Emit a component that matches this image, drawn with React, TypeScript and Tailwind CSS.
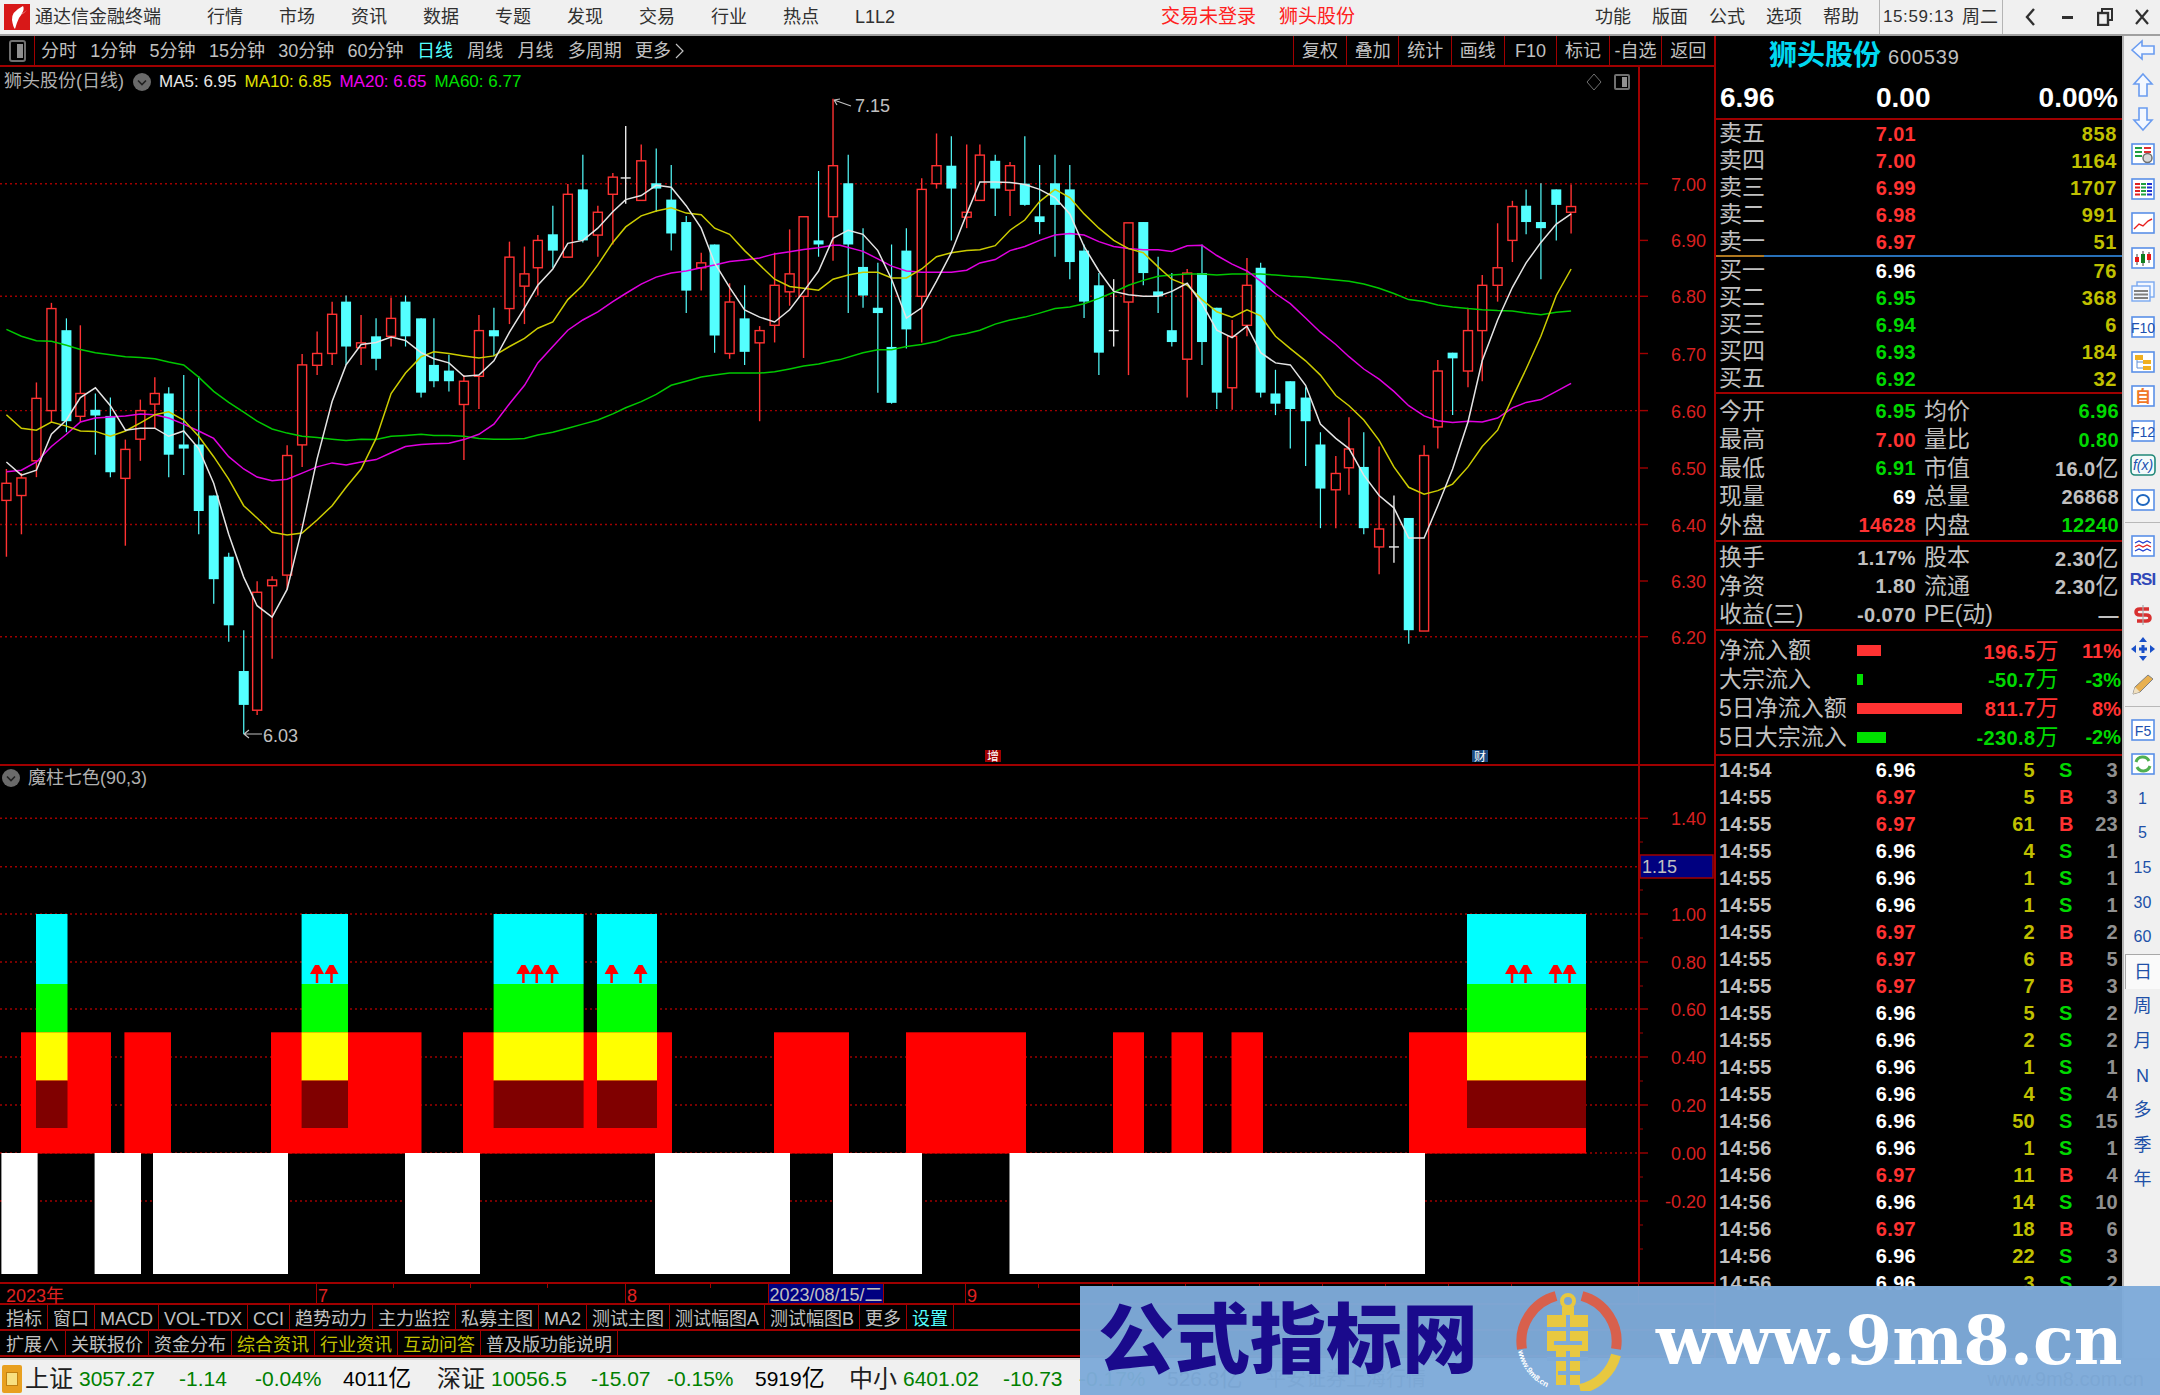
import React from "react";

// colours used by the quote board
const RED = "text-[#ff3232]";
const GREEN = "text-[#00d800]";
const YEL = "text-[#c0c000]";
const GRAY = "text-[#c0c0c0]";
const WHITE = "text-white";

// the chart numbers were read from zoomed crops, so they keep crop units
const xa = (z: number) => z / 1.8667;
const xb = (z: number) => 840 + z / 1.8233;
const yc = (z: number) => 120 + z / 2.45;

type Candle = [string, number, number, number, number, number];

const leftCandles: Candle[] = [
  ["r", 12, 855, 890, 932, 1070], ["r", 40, 865, 877, 920, 1015], ["r", 68, 643, 682, 835, 875], ["r", 96, 448, 462, 712, 740],
  ["c", 124, 486, 515, 738, 765], ["r", 150, 503, 670, 726, 740], ["c", 178, 670, 710, 724, 820], ["c", 206, 680, 725, 863, 875],
  ["r", 234, 783, 807, 878, 1043], ["r", 262, 685, 712, 782, 835], ["r", 289, 630, 670, 696, 755], ["c", 315, 655, 670, 820, 875],
  ["c", 343, 625, 795, 805, 870], ["c", 371, 628, 795, 958, 1015], ["c", 399, 920, 920, 1125, 1185], ["c", 427, 1060, 1070, 1238, 1278],
  ["c", 455, 1250, 1350, 1433, 1505], ["r", 480, 1130, 1157, 1446, 1458], ["r", 508, 1118, 1127, 1141, 1320], ["r", 536, 797, 822, 1115, 1150],
  ["r", 564, 573, 600, 796, 850], ["r", 592, 518, 572, 601, 625], ["r", 620, 445, 476, 572, 600], ["c", 646, 430, 445, 555, 600],
  ["r", 674, 478, 546, 558, 600], ["c", 702, 486, 530, 585, 613], ["r", 730, 435, 486, 530, 555], ["c", 757, 430, 445, 530, 555],
  ["c", 786, 486, 486, 668, 680], ["c", 810, 486, 600, 640, 655], ["c", 838, 575, 614, 640, 665], ["r", 866, 625, 640, 697, 833],
  ["r", 894, 478, 516, 628, 708], ["c", 922, 460, 515, 530, 578], ["r", 951, 298, 336, 462, 500], ["r", 979, 310, 377, 407, 500],
  ["r", 1004, 282, 295, 362, 430], ["c", 1032, 210, 280, 320, 362], ["r", 1060, 157, 182, 336, 337], ["c", 1088, 85, 170, 295, 300],
  ["r", 1116, 210, 226, 282, 335], ["r", 1144, 130, 140, 182, 305], ["w", 1168, 15, 142, 142, 205], ["r", 1197, 60, 100, 197, 197],
  ["c", 1225, 70, 155, 168, 225], ["c", 1253, 110, 195, 278, 320], ["c", 1281, 235, 250, 418, 473], ["r", 1309, 325, 350, 362, 418],
  ["c", 1334, 305, 305, 528, 570], ["r", 1362, 400, 446, 572, 585], ["c", 1390, 405, 486, 568, 600], ["r", 1418, 505, 516, 546, 738],
  ["r", 1446, 325, 405, 503, 545], ["r", 1474, 268, 377, 421, 455], ["r", 1500, 237, 237, 432, 583], ["c", 1528, 125, 295, 305, 335],
  ["r", 1555, -52, 112, 237, 345],
];

const rightCandles: Candle[] = [
  ["c", 15, 85, 155, 305, 473], ["c", 42, 265, 360, 430, 460], ["c", 69, 350, 460, 473, 668], ["c", 94, 305, 556, 693, 695],
  ["c", 121, 265, 320, 513, 560], ["r", 149, 143, 170, 432, 545], ["r", 176, 33, 112, 156, 168], ["c", 203, 40, 112, 168, 295],
  ["r", 231, 60, 226, 238, 265], ["r", 255, 60, 86, 197, 197], ["c", 283, 85, 100, 168, 235], ["r", 310, 103, 112, 172, 235],
  ["c", 337, 40, 156, 208, 210], ["c", 364, 110, 236, 250, 280], ["c", 392, 85, 155, 208, 335], ["c", 419, 110, 170, 348, 390],
  ["c", 445, 305, 320, 445, 485], ["c", 472, 375, 405, 570, 625], ["w", 499, 390, 516, 516, 555], ["r", 526, 252, 252, 446, 625],
  ["c", 553, 250, 250, 375, 405], ["c", 580, 335, 420, 432, 473], ["c", 605, 375, 515, 544, 555], ["r", 633, 365, 375, 586, 680],
  ["c", 660, 305, 375, 544, 600], ["c", 687, 460, 460, 668, 708], ["r", 715, 490, 530, 656, 710], ["r", 742, 338, 405, 503, 530],
  ["c", 767, 350, 362, 668, 680], ["c", 794, 612, 670, 695, 723], ["c", 821, 640, 640, 708, 805], ["c", 849, 655, 680, 738, 848],
  ["c", 876, 765, 795, 903, 1000], ["r", 904, 823, 866, 906, 1000], ["r", 928, 728, 806, 852, 918], ["c", 955, 765, 850, 1000, 1015],
  ["r", 983, 800, 1002, 1046, 1113], ["w", 1010, 920, 1046, 1046, 1085], ["c", 1037, 975, 975, 1250, 1283], ["r", 1065, 797, 822, 1252, 1252],
  ["r", 1090, 588, 615, 752, 805], ["c", 1117, 570, 570, 584, 723], ["r", 1145, 460, 516, 615, 655], ["r", 1171, 380, 405, 516, 640],
  ["r", 1199, 253, 362, 405, 445], ["r", 1226, 198, 212, 295, 348], ["c", 1251, 170, 210, 250, 280], ["c", 1278, 155, 250, 265, 390],
  ["c", 1306, 170, 170, 208, 295], ["r", 1333, 158, 212, 226, 278],
];

const maLines = [
  {
    color: "#00c800",
    a: "12,513 40,530 68,541 96,542 124,552 150,562 178,570 206,575 234,580 262,582 289,585 315,593 343,600 371,630 399,665 427,692 455,716 480,738 508,757 536,767 564,775 592,778 620,782 646,785 674,782 702,783 730,775 757,773 786,770 810,773 838,773 866,775 894,780 922,782 951,782 979,780 1004,772 1032,765 1060,755 1088,745 1116,735 1144,720 1168,705 1197,690 1225,672 1253,650 1281,640 1309,630 1334,625 1362,620 1390,620 1418,620 1446,617 1474,610 1500,603 1528,598 1555,590",
    b: "0,587 42,570 69,563 94,563 121,555 149,550 176,543 203,530 231,523 255,515 283,500 310,490 337,483 364,473 392,462 419,458 445,450 472,437 499,422 526,405 553,393 580,383 605,380 633,377 660,377 687,380 715,377 742,377 767,377 794,380 821,383 849,385 876,388 904,392 928,395 955,402 983,412 1010,425 1037,440 1065,445 1090,453 1117,458 1145,462 1171,465 1199,467 1226,468 1251,473 1278,477 1306,471 1333,468",
  },
  {
    color: "#e000e0",
    a: "12,862 40,858 68,838 96,800 124,770 150,740 178,730 206,728 234,725 262,720 289,722 315,730 343,745 371,762 399,780 427,825 455,855 480,875 508,884 536,880 564,865 592,850 620,840 646,845 674,838 702,832 730,815 757,800 786,795 810,793 838,792 866,783 894,770 922,745 951,695 979,650 1004,595 1032,555 1060,515 1088,490 1116,470 1144,445 1168,425 1197,402 1225,385 1253,375 1281,370 1309,362 1334,355 1362,347 1390,343 1418,338 1446,328 1474,323 1500,317 1528,313 1555,307",
    b: "0,307 42,322 69,340 94,358 121,370 149,373 176,373 203,373 231,368 255,350 283,342 310,320 337,310 364,295 392,282 419,278 445,282 472,298 499,310 526,315 553,318 580,318 605,322 633,308 660,307 687,332 715,353 742,370 767,395 794,425 821,450 849,485 876,520 904,550 928,580 955,610 983,635 1010,665 1037,700 1065,725 1090,737 1117,741 1145,738 1171,740 1199,730 1226,705 1251,692 1278,685 1306,665 1333,645",
  },
  {
    color: "#cccc00",
    a: "12,722 40,755 68,760 96,740 124,750 150,762 178,763 206,775 234,762 262,742 289,722 315,715 343,735 371,775 399,825 427,880 455,945 480,975 508,1010 536,1017 564,1012 592,980 620,945 646,900 674,855 702,780 730,670 757,620 786,580 810,568 838,572 866,578 894,583 922,578 951,555 979,535 1004,510 1032,495 1060,440 1088,405 1116,355 1144,300 1168,262 1197,235 1225,223 1253,215 1281,228 1309,232 1334,265 1362,280 1390,320 1418,355 1446,390 1474,408 1500,412 1528,417 1555,390",
    b: "15,380 42,373 69,373 94,387 121,387 149,365 176,335 203,325 231,320 255,318 283,308 310,270 337,245 364,200 392,170 419,190 445,230 472,265 499,295 526,315 553,325 580,360 605,390 633,405 660,440 687,470 715,483 742,465 767,480 794,530 821,560 849,590 876,625 904,675 928,700 955,735 983,785 1010,850 1037,900 1065,917 1090,908 1117,892 1145,850 1171,800 1199,760 1226,680 1251,610 1278,530 1306,430 1333,365",
  },
  {
    color: "#e4e4e4",
    a: "12,838 40,870 68,858 96,770 124,735 150,680 178,656 206,700 234,760 262,755 289,755 315,775 343,762 371,805 399,890 427,1015 455,1120 480,1190 508,1218 536,1150 564,1000 592,830 620,690 646,600 674,550 702,545 730,532 757,540 786,570 810,585 838,595 866,628 894,625 922,590 951,520 979,460 1004,405 1032,365 1060,302 1088,295 1116,265 1144,225 1168,195 1197,185 1225,160 1253,165 1281,210 1309,265 1334,350 1362,410 1390,465 1418,483 1446,495 1474,465 1500,420 1528,370 1555,290",
    b: "15,270 42,280 69,320 94,390 121,485 149,460 176,395 203,325 231,230 255,152 283,152 310,153 337,158 364,170 392,190 419,230 445,310 472,370 499,420 526,428 553,432 580,432 605,420 633,400 660,450 687,515 715,533 742,505 767,570 794,595 821,600 849,650 876,745 904,780 928,805 955,870 983,920 1010,950 1037,1024 1065,1024 1090,945 1117,855 1145,740 1171,590 1199,490 1226,410 1251,350 1278,300 1306,255 1333,230",
  },
];

const toPoints = (s: string, fx: (z: number) => number) =>
  s
    .split(" ")
    .map((p) => {
      const [x, y] = p.split(",").map(Number);
      return `${fx(x).toFixed(1)},${yc(y).toFixed(1)}`;
    })
    .join(" ");

const CandleMark = ({ c, fx }: { c: Candle; fx: (z: number) => number }) => {
  const [kind, xz, wt, bt, bb, wb] = c;
  const x = fx(xz);
  if (kind === "w") {
    return (
      <g stroke="#e8e8e8" strokeWidth={1.4}>
        <line x1={x} x2={x} y1={yc(wt)} y2={yc(wb)} />
        <line x1={x - 5} x2={x + 5} y1={yc(bt)} y2={yc(bt)} />
      </g>
    );
  }
  if (kind === "c") {
    return (
      <g>
        <line x1={x} x2={x} y1={yc(wt)} y2={yc(wb)} stroke="#54ffff" strokeWidth={1.2} />
        <rect x={x - 5} y={yc(bt)} width={10} height={yc(bb) - yc(bt)} fill="#54ffff" />
      </g>
    );
  }
  return (
    <g stroke="#ff3232" strokeWidth={1.4} fill="none">
      <line x1={x} x2={x} y1={yc(wt)} y2={yc(bt)} />
      <line x1={x} x2={x} y1={yc(bb)} y2={yc(wb)} />
      <rect x={x - 4.5} y={yc(bt)} width={9} height={yc(bb) - yc(bt)} fill="#000" />
    </g>
  );
};

const MainChart = () => {
  const labels: [string, number, boolean][] = [
    ["7.00", 183.7, true], ["6.90", 240.4, false], ["6.80", 296.3, true], ["6.70", 353.5, false],
    ["6.60", 410.6, true], ["6.50", 468, false], ["6.40", 524.5, true], ["6.30", 581, false], ["6.20", 636.7, true],
  ];
  return (
    <svg viewBox="0 95 1714 669" width={1714} height={669} className="block">
      {labels.map(([t, y, dotted]) => (
        <g key={t}>
          {dotted && <line x1={0} x2={1639} y1={y} y2={y} stroke="#a00000" strokeWidth={1.4} strokeDasharray="2 3" />}
          <line x1={1639} x2={1648} y1={y} y2={y} stroke="#a00000" strokeWidth={1.4} />
          <text x={1706} y={y + 7} textAnchor="end" fontSize={18} fill="#d82020">{t}</text>
        </g>
      ))}
      <line x1={1639} x2={1639} y1={95} y2={764} stroke="#a00000" strokeWidth={2} />
      {leftCandles.map((c) => <CandleMark key={"a" + c[1]} c={c} fx={xa} />)}
      {rightCandles.map((c) => <CandleMark key={"b" + c[1]} c={c} fx={xb} />)}
      {maLines.map((m) => (
        <g key={m.color} fill="none" stroke={m.color} strokeWidth={1.5}>
          <polyline points={toPoints(m.a, xa) + " " + toPoints(m.b, xb)} />
        </g>
      ))}
      {/* high and low marks */}
      <g stroke="#c0c0c0" fill="none" strokeWidth={1.2}>
        <path d="M834 100 L851 106 M834 100 L840 99 M834 100 L837 105" />
        <path d="M244 734 L262 734 M244 734 L249 730 M244 734 L249 738" />
      </g>
      <text x={855} y={112} fontSize={18} fill="#c0c0c0">7.15</text>
      <text x={263} y={742} fontSize={18} fill="#c0c0c0">6.03</text>
      <rect x={985} y={750} width={16} height={12} fill="#a00000" />
      <text x={993} y={761} fontSize={12} fill="#fff" textAnchor="middle">增</text>
      <rect x={1472} y={750} width={16} height={12} fill="#1a4a80" />
      <text x={1480} y={761} fontSize={12} fill="#fff" textAnchor="middle">财</text>
    </svg>
  );
};

const redBlocks = [[21, 111], [124.4, 171], [271, 421.5], [463, 672], [774, 849], [906, 1026], [1113, 1144], [1171.5, 1203], [1231.5, 1263], [1409, 1586]];
const colorColumns = [[36, 67.5], [301.6, 348], [493.6, 583.6], [597, 657], [1467, 1586]];
const whiteBlocks = [[1.4, 37.6], [94.6, 141], [153, 288], [405, 480], [655, 790], [833, 922], [1009.5, 1425]];
const arrows = [317, 331.5, 523.4, 536.7, 552, 611.6, 640.5, 1512, 1525.5, 1555.5, 1569.5];
const lowerLabels: [string, number][] = [
  ["1.40", 818.3], ["1.00", 914], ["0.80", 962], ["0.60", 1009], ["0.40", 1057], ["0.20", 1105], ["0.00", 1153], ["-0.20", 1201],
];
const lowerMinorTicks = [842, 890, 938, 986, 1033, 1081, 1129, 1177, 1225, 1249];

const LowerChart = () => (
  <svg viewBox="0 790 1714 492" width={1714} height={492} className="block">
    {[818.3, 866.7, 914, 962, 1009, 1057, 1105, 1153, 1201].map((y) => (
      <g key={y}>
        <line x1={0} x2={1639} y1={y} y2={y} stroke="#a00000" strokeWidth={1.4} strokeDasharray="2 3" />
        <line x1={1639} x2={1648} y1={y} y2={y} stroke="#a00000" strokeWidth={1.4} />
      </g>
    ))}
    {lowerMinorTicks.map((y) => <line key={y} x1={1639} x2={1643} y1={y} y2={y} stroke="#a00000" strokeWidth={1} />)}
    {lowerLabels.map(([t, y]) => (
      <text key={t} x={1706} y={y + 7} textAnchor="end" fontSize={18} fill="#d82020">{t}</text>
    ))}
    <line x1={1639} x2={1639} y1={790} y2={1282} stroke="#a00000" strokeWidth={2} />
    <rect x={1640} y={855} width={73} height={23} fill="#000080" stroke="#a00000" strokeWidth={1.5} />
    <text x={1642} y={873} fontSize={18} fill="#c0c0c0">1.15</text>
    {redBlocks.map(([a, b]) => <rect key={a} x={a} y={1032.3} width={b - a} height={121.2} fill="#ff0000" />)}
    {colorColumns.map(([a, b]) => (
      <g key={a}>
        <rect x={a} y={914} width={b - a} height={70} fill="#00ffff" />
        <rect x={a} y={984} width={b - a} height={48.3} fill="#00ff00" />
        <rect x={a} y={1032.3} width={b - a} height={48.3} fill="#ffff00" />
        <rect x={a} y={1080.6} width={b - a} height={47.4} fill="#800000" />
      </g>
    ))}
    {whiteBlocks.map(([a, b]) => <rect key={a} x={a} y={1153} width={b - a} height={121} fill="#ffffff" />)}
    {arrows.map((x) => (
      <g key={x} fill="#ff0000">
        <rect x={x - 1.25} y={973} width={2.5} height={10} />
        <path d={`M${x - 2} 965 L${x + 2} 965 L${x + 7} 974 L${x - 7} 974 Z`} />
      </g>
    ))}
  </svg>
);

const ChevronCircle = () => (
  <svg width={18} height={18} viewBox="0 0 18 18" className="shrink-0">
    <circle cx={9} cy={9} r={9} fill="#6a6a6a" />
    <path d="M5 7.5 L9 11.5 L13 7.5" fill="none" stroke="#202020" strokeWidth={1.6} />
  </svg>
);

const Toolbar = () => (
  <div className="flex h-[31px] shrink-0 border-b-2 border-[#a00000] text-[18px] text-[#c0c0c0]">
    <div className="flex w-[35px] items-center justify-center border-r border-[#a00000]">
      <div className="flex h-[22px] w-[17px] items-center justify-end rounded-[3px] border-2 border-[#707070] pr-[1px]">
        <div className="h-[14px] w-[6px] bg-[#909090]" />
      </div>
    </div>
    <div className="ml-[6px] flex items-center gap-[13.3px] whitespace-nowrap pt-[1px]">
      {["分时", "1分钟", "5分钟", "15分钟", "30分钟", "60分钟"].map((t) => <span key={t}>{t}</span>)}
      <span className="text-[#54ffff]">日线</span>
      <span className="ml-[1px]">周线</span>
      <span className="ml-[1px]">月线</span>
      <span className="ml-[1px]">多周期</span>
      <span className="flex items-center gap-[4px]">
        更多
        <svg width={9} height={16} viewBox="0 0 9 16"><path d="M1 1 L8 8 L1 15" fill="none" stroke="#c0c0c0" strokeWidth={1.2} /></svg>
      </span>
    </div>
    <div className="ml-auto flex">
      {["复权", "叠加", "统计", "画线", "F10", "标记", "-自选", "返回"].map((t) => (
        <div key={t} className="flex w-[52.6px] items-center justify-center border-l border-[#a00000] pt-[1px] whitespace-nowrap">{t}</div>
      ))}
    </div>
  </div>
);

const InfoRow = () => (
  <div className="flex h-[28px] w-[1640px] shrink-0 items-center border-r-2 border-[#a00000] pl-[4px] pt-[1px] text-[17px] whitespace-nowrap">
    <span className="text-[18px] text-[#b0b0b0]">狮头股份(日线)</span>
    <span className="ml-[9px]"><ChevronCircle /></span>
    <span className="ml-[8px] text-[#e8e8e8]">MA5: 6.95</span>
    <span className="ml-[8px] text-[#e0e000]">MA10: 6.85</span>
    <span className="ml-[8px] text-[#f000f0]">MA20: 6.65</span>
    <span className="ml-[8px] text-[#00e000]">MA60: 6.77</span>
    <svg width={16} height={18} viewBox="0 0 16 18" className="ml-auto mr-[12px]"><path d="M8 1 L15 9 L8 17 L1 9 Z" fill="none" stroke="#707070" /></svg>
    <div className="mr-[8px] flex h-[16px] w-[16px] items-center justify-end rounded-[2px] border-2 border-[#707070] pr-[1px]">
      <div className="h-[10px] w-[5px] bg-[#909090]" />
    </div>
  </div>
);

const minorDateTicks = [393, 470, 547, 710, 1038, 1112, 1185, 1259, 1322, 1385, 1448, 1511];

const DateRow = () => (
  <div className="relative flex h-[23px] shrink-0 border-y-2 border-[#a00000] text-[18px] leading-[19px] whitespace-nowrap text-[#e02020]">
    <div className="w-[316px] pl-[6px] pt-[3px]">2023年</div>
    <div className="w-[309px] border-l border-[#a00000] pl-[1px] pt-[3px]">7</div>
    <div className="w-[143px] border-l border-[#a00000] pl-[1px] pt-[3px]">8</div>
    <div className="w-[116px] border-x border-[#a00000] bg-[#000080] pt-[2px] text-center text-[#c0c0c0]">2023/08/15/二</div>
    <div className="w-[81px]" />
    <div className="w-[674px] border-x border-[#a00000] pl-[1px] pt-[3px]">9</div>
    {minorDateTicks.map((x) => (
      <span key={x} className="absolute top-0 h-[4px] w-px bg-[#a00000]" style={{ left: x }} />
    ))}
  </div>
);

const TabRow = ({ items }: { items: { t: string; c?: string }[] }) => (
  <div className="flex h-[26px] shrink-0 items-stretch border-b-2 border-[#a00000] pl-[1px] text-[18px] whitespace-nowrap text-[#c0c0c0]">
    {items.map((i) => (
      <div key={i.t} className={`flex items-center border-r border-[#a00000] px-[5px] pt-[5px] ${i.c ?? ""}`}>{i.t}</div>
    ))}
  </div>
);

const Row5 = ({ label, price, pc, vol }: { label: string; price: string; pc: string; vol: string }) => (
  <div className="flex h-[27px] items-center justify-between">
    <div className="flex w-[197px] items-center justify-between">
      <span className="text-[23px] leading-none text-[#c0c0c0]">{label}</span>
      <span className={`text-[20px] font-bold tracking-[0.3px] ${pc}`}>{price}</span>
    </div>
    <span className={`pr-[1px] text-[20px] font-bold tracking-[0.6px] ${YEL}`}>{vol}</span>
  </div>
);

const Row2 = ({ a, av, ac, b, bv, bc }: { a: string; av: string; ac: string; b: string; bv: React.ReactNode; bc: string }) => (
  <div className="flex h-[28.5px] items-center">
    <div className="flex w-[197px] items-center justify-between">
      <span className="text-[23px] leading-none whitespace-nowrap text-[#c0c0c0]">{a}</span>
      <span className={`text-[20px] font-bold tracking-[0.4px] whitespace-nowrap ${ac}`}>{av}</span>
    </div>
    <div className="ml-[8px] flex flex-1 items-center justify-between">
      <span className="text-[23px] leading-none whitespace-nowrap text-[#c0c0c0]">{b}</span>
      <span className={`text-[20px] font-bold tracking-[0.4px] whitespace-nowrap ${bc}`}>{bv}</span>
    </div>
  </div>
);

const Yi = ({ v }: { v: string }) => <>{v}<span className="text-[23px] font-normal">亿</span></>;
const Wan = ({ v }: { v: string }) => <>{v}<span className="text-[23px] font-normal">万</span></>;

const flows = [
  { label: "净流入额", bar: "bg-[#ff3232]", w: 24, v: "196.5", p: "11%", c: RED },
  { label: "大宗流入", bar: "bg-[#00e000]", w: 6, v: "-50.7", p: "-3%", c: GREEN },
  { label: "5日净流入额", bar: "bg-[#ff3232]", w: 105, v: "811.7", p: "8%", c: RED },
  { label: "5日大宗流入", bar: "bg-[#00e000]", w: 29, v: "-230.8", p: "-2%", c: GREEN },
];

const ticks: [string, string, string, string, string][] = [
  ["14:54", "6.96", "5", "S", "3"], ["14:55", "6.97", "5", "B", "3"], ["14:55", "6.97", "61", "B", "23"], ["14:55", "6.96", "4", "S", "1"],
  ["14:55", "6.96", "1", "S", "1"], ["14:55", "6.96", "1", "S", "1"], ["14:55", "6.97", "2", "B", "2"], ["14:55", "6.97", "6", "B", "5"],
  ["14:55", "6.97", "7", "B", "3"], ["14:55", "6.96", "5", "S", "2"], ["14:55", "6.96", "2", "S", "2"], ["14:55", "6.96", "1", "S", "1"],
  ["14:55", "6.96", "4", "S", "4"], ["14:56", "6.96", "50", "S", "15"], ["14:56", "6.96", "1", "S", "1"], ["14:56", "6.97", "11", "B", "4"],
  ["14:56", "6.96", "14", "S", "10"], ["14:56", "6.97", "18", "B", "6"], ["14:56", "6.96", "22", "S", "3"], ["14:56", "6.96", "3", "S", "2"],
];

const QuotePanel = () => (
  <div className="flex h-full w-[408px] shrink-0 flex-col overflow-hidden border-l-2 border-[#a00000] bg-black">
    <div className="h-[84px] shrink-0 border-b-2 border-[#a00000]">
      <div className="flex h-[39px] items-center pl-[53px]">
        <span className="text-[28px] font-bold leading-none text-[#00d8f0]">狮头股份</span>
        <span className="ml-[7px] mt-[3px] text-[20px] tracking-[0.8px] text-[#c0c0c0]">600539</span>
      </div>
      <div className="flex h-[43px] items-center pl-[4px] pr-[4px] pt-[2px] text-[28px] font-bold leading-none text-white">
        <span className="w-[156px]">6.96</span>
        <span>0.00</span>
        <span className="ml-auto">0.00%</span>
      </div>
    </div>
    <div className="shrink-0 pl-[3px] pr-[4px]">
      <Row5 label="卖五" price="7.01" pc={RED} vol="858" />
      <Row5 label="卖四" price="7.00" pc={RED} vol="1164" />
      <Row5 label="卖三" price="6.99" pc={RED} vol="1707" />
      <Row5 label="卖二" price="6.98" pc={RED} vol="991" />
      <Row5 label="卖一" price="6.97" pc={RED} vol="51" />
    </div>
    <div className="flex h-[2px] shrink-0">
      <div className="w-[48px] bg-[#b07820]" />
      <div className="flex-1 bg-[#2870b8]" />
    </div>
    <div className="shrink-0 border-b-2 border-[#a00000] pl-[3px] pr-[4px]">
      <Row5 label="买一" price="6.96" pc={WHITE} vol="76" />
      <Row5 label="买二" price="6.95" pc={GREEN} vol="368" />
      <Row5 label="买三" price="6.94" pc={GREEN} vol="6" />
      <Row5 label="买四" price="6.93" pc={GREEN} vol="184" />
      <Row5 label="买五" price="6.92" pc={GREEN} vol="32" />
    </div>
    <div className="shrink-0 border-b-2 border-[#a00000] pl-[3px] pr-[3px] pt-[3px]">
      <Row2 a="今开" av="6.95" ac={GREEN} b="均价" bv="6.96" bc={GREEN} />
      <Row2 a="最高" av="7.00" ac={RED} b="量比" bv="0.80" bc={GREEN} />
      <Row2 a="最低" av="6.91" ac={GREEN} b="市值" bv={<Yi v="16.0" />} bc={GRAY} />
      <Row2 a="现量" av="69" ac={WHITE} b="总量" bv="26868" bc={GRAY} />
      <Row2 a="外盘" av="14628" ac={RED} b="内盘" bv="12240" bc={GREEN} />
    </div>
    <div className="shrink-0 border-b-2 border-[#a00000] pl-[3px] pr-[3px] pt-[2px]">
      <Row2 a="换手" av="1.17%" ac={GRAY} b="股本" bv={<Yi v="2.30" />} bc={GRAY} />
      <Row2 a="净资" av="1.80" ac={GRAY} b="流通" bv={<Yi v="2.30" />} bc={GRAY} />
      <Row2 a="收益(三)" av="-0.070" ac={GRAY} b="PE(动)" bv="—" bc={GRAY} />
    </div>
    <div className="h-[125px] shrink-0 border-b-2 border-[#a00000] pl-[3px] pr-[1px] pt-[5.5px]">
      {flows.map((f) => (
        <div key={f.label} className="flex h-[28.8px] items-center">
          <span className="w-[138px] text-[23px] leading-none font-normal whitespace-nowrap text-[#c0c0c0]">{f.label}</span>
          <div className={`h-[11px] ${f.bar}`} style={{ width: f.w }} />
          <span className={`ml-auto text-[20px] font-bold tracking-[0.4px] whitespace-nowrap ${f.c}`}><Wan v={f.v} /></span>
          <span className={`w-[62px] text-right text-[20px] font-bold whitespace-nowrap ${f.c}`}>{f.p}</span>
        </div>
      ))}
    </div>
    <div className="pl-[3px] pr-[4px] text-[20px] font-bold tracking-[0.3px]">
      {ticks.map((t, i) => (
        <div key={i} className="flex h-[27px] items-center">
          <span className={`w-[100px] ${GRAY}`}>{t[0]}</span>
          <span className={`w-[97px] text-right ${t[1] === "6.97" ? RED : WHITE}`}>{t[1]}</span>
          <span className={`w-[119px] text-right ${YEL}`}>{t[2]}</span>
          <span className={`ml-[24px] ${t[3] === "B" ? RED : GREEN}`}>{t[3]}</span>
          <span className="ml-auto text-[#909090]">{t[4]}</span>
        </div>
      ))}
    </div>
  </div>
);

const IconBox = ({ children }: { children: React.ReactNode }) => (
  <svg width={24} height={24} viewBox="0 0 24 24">
    <rect x={1} y={2} width={22} height={20} fill="#fff" stroke="#5a90e8" strokeWidth={1.6} />
    {children}
  </svg>
);

const gridBars = (cols: string[]) =>
  cols.flatMap((c, i) => [6, 9.5, 13, 16.5].map((y) => <rect key={c + y} x={4 + i * 6} y={y} width={5} height={2} fill={c} />));

const sideIcons: React.ReactNode[] = [
  <svg width={26} height={24} viewBox="0 0 26 24"><path d="M2 12 L12 3 L12 8 L24 8 L24 16 L12 16 L12 21 Z" fill="#f4f8ff" stroke="#6a9cf0" strokeWidth={1.6} /></svg>,
  <svg width={24} height={26} viewBox="0 0 24 26"><path d="M12 2 L21 12 L16 12 L16 24 L8 24 L8 12 L3 12 Z" fill="#f4f8ff" stroke="#6a9cf0" strokeWidth={1.6} /></svg>,
  <svg width={24} height={26} viewBox="0 0 24 26"><path d="M12 24 L21 14 L16 14 L16 2 L8 2 L8 14 L3 14 Z" fill="#f4f8ff" stroke="#6a9cf0" strokeWidth={1.6} /></svg>,
  <IconBox>
    {[5, 9, 13].map((y) => <rect key={y} x={4} y={y} width={7} height={2} fill="#20a040" />)}
    {[5, 9].map((y) => <rect key={y} x={13} y={y} width={7} height={2} fill="#e03030" />)}
    <circle cx={16.5} cy={16} r={4.5} fill="#d8d8d8" stroke="#707070" strokeWidth={1.5} />
  </IconBox>,
  <IconBox>{gridBars(["#e02020", "#20a040", "#2030d0"])}</IconBox>,
  <IconBox><path d="M3 18 L8 13 L12 15 L17 10 L21 8" fill="none" stroke="#e82020" strokeWidth={1.4} /></IconBox>,
  <IconBox>
    <path d="M6 8 V19 M12 5 V20 M18 6 V17" stroke="#404040" strokeWidth={1} />
    <rect x={4} y={11} width={4} height={5} fill="#e81818" />
    <rect x={10} y={8} width={4} height={9} fill="#108020" />
    <rect x={16} y={8} width={4} height={6} fill="#e81818" />
  </IconBox>,
  <svg width={26} height={24} viewBox="0 0 26 24">
    <rect x={7} y={2} width={17} height={15} fill="#f4f8ff" stroke="#7aa8f0" strokeWidth={1.4} />
    <rect x={2} y={6} width={18} height={15} fill="#f4f8ff" stroke="#7aa8f0" strokeWidth={1.4} />
    {[10, 13.5, 17].map((y) => <rect key={y} x={4} y={y} width={14} height={2} fill="#808080" />)}
  </svg>,
  <IconBox><text x={12} y={17.5} textAnchor="middle" fontSize={14} fill="#2050b0">F10</text></IconBox>,
  <IconBox>
    <rect x={4} y={5} width={8} height={5} fill="#f0b020" />
    <rect x={12} y={10} width={8} height={4} fill="#f0b020" />
    <rect x={12} y={16} width={8} height={4} fill="#f0b020" />
    <path d="M6 10 V18 H12 M6 12 H12" fill="none" stroke="#6090d8" />
  </IconBox>,
  <IconBox><text x={12} y={18} textAnchor="middle" fontSize={16} fontWeight={700} fill="#f07828">自</text></IconBox>,
  <IconBox><text x={12} y={17.5} textAnchor="middle" fontSize={14} fill="#2050b0">F12</text></IconBox>,
  <svg width={26} height={24} viewBox="0 0 26 24">
    <rect x={1} y={2} width={24} height={20} rx={4} fill="#f4fafa" stroke="#208878" strokeWidth={1.6} />
    <text x={13} y={17} textAnchor="middle" fontSize={14} fontStyle="italic" fill="#2050b0">f(x)</text>
  </svg>,
  <IconBox><ellipse cx={12} cy={12} rx={6} ry={5} fill="none" stroke="#2068c0" strokeWidth={2} /></IconBox>,
];

const sideIcons2: React.ReactNode[] = [
  <IconBox>
    <path d="M4 9 L8 7 L12 9 L16 7 L20 9" fill="none" stroke="#2040d0" strokeWidth={1.2} />
    <path d="M4 13 L8 11 L12 13 L16 11 L20 13" fill="none" stroke="#e02020" strokeWidth={1.2} />
    <path d="M4 17 L8 15 L12 17 L16 15 L20 17" fill="none" stroke="#2040d0" strokeWidth={1.2} />
  </IconBox>,
  <span className="text-[17px] font-bold tracking-[-1px] text-[#3048b8]">RSI</span>,
  <svg width={24} height={24} viewBox="0 0 24 24">
    <path d="M18 6 H9 Q5 6 5 9 Q5 12 9 12 H15 Q19 12 19 15 Q19 18 15 18 H6" fill="none" stroke="#d83030" strokeWidth={3.5} />
    <path d="M12 2 V22" stroke="#a8a8a8" strokeWidth={1.2} />
  </svg>,
  <svg width={26} height={26} viewBox="0 0 26 26" fill="#1a50c8">
    <path d="M13 1 L17 6 H9 Z M13 25 L17 20 H9 Z M1 13 L6 9 V17 Z M25 13 L20 9 V17 Z" />
    <path d="M9 13 H17 M13 9 V17" stroke="#1a50c8" strokeWidth={3} />
  </svg>,
  <svg width={26} height={24} viewBox="0 0 26 24">
    <path d="M3 22 L5 15 L18 3 L23 7 L10 20 Z" fill="#e8b050" stroke="#808080" strokeWidth={1} />
    <path d="M3 22 L5 15 L10 20 Z" fill="#f0e0c0" />
  </svg>,
];

const sideText = ["1", "5", "15", "30", "60"];
const sideText2 = ["周", "月", "N", "多", "季", "年"];

const SideBar = () => (
  <div className="flex h-full w-[38px] shrink-0 flex-col items-center overflow-hidden border-l-2 border-[#b4b4b4] bg-[#f0f0f0] pl-[1px] text-[#2050a8]">
    {sideIcons.map((ic, i) => (
      <div key={i} className={`flex h-[34.6px] shrink-0 items-center justify-center ${i === 0 ? "-mt-[3px]" : ""}`}>{ic}</div>
    ))}
    <div className="flex h-[11px] w-full shrink-0 items-center"><div className="h-px w-full bg-[#b8b8b8]" /></div>
    {sideIcons2.map((ic, i) => (
      <div key={i} className="flex h-[34.6px] shrink-0 items-center justify-center">{ic}</div>
    ))}
    <div className="flex h-[11px] w-full shrink-0 items-center"><div className="h-px w-full bg-[#b8b8b8]" /></div>
    <div className="flex h-[34.6px] shrink-0 items-center justify-center">
      <IconBox><text x={12} y={17.5} textAnchor="middle" fontSize={14} fill="#2050b0">F5</text></IconBox>
    </div>
    <div className="flex h-[34.6px] shrink-0 items-center justify-center">
      <IconBox><path d="M5 10 A7 7 0 0 1 18 9 M19 14 A7 7 0 0 1 6 15" fill="none" stroke="#50b050" strokeWidth={3} /></IconBox>
    </div>
    {sideText.map((t) => (
      <div key={t} className="flex h-[34.6px] shrink-0 items-center justify-center text-[16px] leading-none">{t}</div>
    ))}
    <div className="flex h-[34.6px] w-full shrink-0 items-center justify-center border-l border-t border-[#a8a8a8] bg-[#fafafa] text-[18px] leading-none">日</div>
    {sideText2.map((t) => (
      <div key={t} className="flex h-[34.6px] shrink-0 items-center justify-center text-[18px] leading-none">{t}</div>
    ))}
  </div>
);

const TitleBar = () => (
  <div className="flex h-[36px] shrink-0 items-center border-b-2 border-[#a0a0a0] bg-[#f0f0f0] text-[18px] whitespace-nowrap text-[#303030]">
    <svg width={26} height={26} viewBox="0 0 26 26" className="ml-[4px]">
      <rect width={26} height={26} fill="#d81818" />
      <path d="M19 2 Q7 8 8 16 Q9 23 11 25 Q13 18 15 14 Q18 9 23 6 Q20 9 17 11 Q21 5 19 2 Z" fill="#fff" />
    </svg>
    <span className="ml-[5px]">通达信金融终端</span>
    <div className="ml-[46px] flex gap-[36px]">
      {["行情", "市场", "资讯", "数据", "专题", "发现", "交易", "行业", "热点", "L1L2"].map((t) => <span key={t}>{t}</span>)}
    </div>
    <span className="ml-[266px] text-[19px] text-[#ff2020]">交易未登录</span>
    <span className="ml-[23px] text-[19px] text-[#ff2020]">狮头股份</span>
    <div className="ml-auto flex gap-[21px] pl-[10px]">
      {["功能", "版面", "公式", "选项", "帮助"].map((t) => <span key={t}>{t}</span>)}
    </div>
    <div className="ml-[20px] flex h-full items-center border-x border-[#b4b4b4] pl-[3px] pr-[4px] text-[17px]">
      <span className="tracking-[0.6px]">15:59:13</span>
      <span className="ml-[8px] text-[18px]">周二</span>
    </div>
    <div className="flex items-center text-[#303030]">
      <svg width={12} height={18} viewBox="0 0 12 18" className="ml-[21px]"><path d="M10 1 L3 9 L10 17" fill="none" stroke="#303030" strokeWidth={2.4} /></svg>
      <div className="ml-[26px] h-[3px] w-[11px] bg-[#303030]" />
      <svg width={16} height={18} viewBox="0 0 16 18" className="ml-[24px]">
        <path d="M5 4 V1 H15 V12 H12" fill="none" stroke="#303030" strokeWidth={2} />
        <rect x={1} y={5} width={10} height={12} fill="none" stroke="#303030" strokeWidth={2.4} />
      </svg>
      <svg width={14} height={16} viewBox="0 0 14 16" className="ml-[22px] mr-[11px]"><path d="M1 1 L13 15 M13 1 L1 15" stroke="#303030" strokeWidth={2.2} /></svg>
    </div>
  </div>
);

const statusGroups = [
  { name: "上证", v: "3057.27", d: "-1.14", p: "-0.04%", amt: "4011" },
  { name: "深证", v: "10056.5", d: "-15.07", p: "-0.15%", amt: "5919" },
  { name: "中小", v: "6401.02", d: "-10.73", p: "-0.17%", amt: "526.8" },
];

const StatusBar = () => (
  <div className="flex h-[37px] shrink-0 items-center border-t-2 border-[#d8d8d8] bg-[#f0f0f0] pl-[2px] pt-[2px] text-[21px] whitespace-nowrap">
    <div className="flex h-[28px] w-[20px] shrink-0 items-center justify-center rounded-[2px] bg-[#e8a020]">
      <div className="h-[14px] w-[12px] border border-[#c08010] bg-[#f8e080]" />
    </div>
    {statusGroups.map((g) => (
      <div key={g.name} className="flex shrink-0 items-center">
        <span className="ml-[3px] w-[49px] text-[24px] leading-none text-[#202020]">{g.name}</span>
        <span className="ml-[5px] w-[80px] text-[#008000]">{g.v}</span>
        <span className="ml-[20px] w-[60px] text-[#008000]">{g.d}</span>
        <span className="ml-[16px] w-[70px] text-[#008000]">{g.p}</span>
        <span className="ml-[18px] w-[72px] font-medium text-black">{g.amt}<span className="text-[23px] font-normal">亿</span></span>
        <span className="w-[19px]" />
      </div>
    ))}
    <span className="ml-[8px] shrink-0 text-[20px] text-[#404040]">平安证券上海行情</span>
    <span className="ml-auto mr-[16px] shrink-0 text-[20px] text-[#404040]">www.9m8.com.cn</span>
  </div>
);

const WatermarkLogo = () => (
  <svg width={106} height={100} viewBox="0 0 106 100" className="ml-[38px] shrink-0">
    <path d="M6 58 A47 47 0 0 1 40 5" fill="none" stroke="#d8604c" strokeWidth={10} />
    <path d="M66 5 A47 47 0 0 1 100 58" fill="none" stroke="#d8604c" strokeWidth={10} />
    <path d="M100 64 A47 47 0 0 1 64 98" fill="none" stroke="#e8c840" strokeWidth={10} />
    <circle cx={52} cy={10} r={6} fill="none" stroke="#e8c840" strokeWidth={4} />
    <path d="M46 16 H58 V24 H72 V60 H64 V94 H40 V60 H31 V24 H46 Z" fill="#e8c840" />
    <path d="M31 38 H72 M52 24 V52 M38 52 H66 M31 68 H72 M52 60 V94 M42 82 H64" fill="none" stroke="#7eaad9" strokeWidth={4} />
    <path id="wm-arc" d="M2 60 A50 50 0 0 0 44 100" fill="none" />
    <text fontSize={8} fontWeight={700} fill="#fff">
      <textPath href="#wm-arc">www.9m8.cn</textPath>
    </text>
  </svg>
);

const Watermark = () => (
  <div className="absolute left-[1080px] top-[1286px] flex h-[109px] w-[1080px] items-center bg-[#7eaad9]/[0.97]">
    <span className="ml-[18px] text-[76px] font-black leading-none whitespace-nowrap text-[#1a0a8c]">公式指标网</span>
    <WatermarkLogo />
    <span className="ml-[34px] font-['DejaVu_Serif',serif] text-[67px] font-bold leading-none whitespace-nowrap text-white">www.9m8.cn</span>
  </div>
);

export default function App() {
  return (
    <div className="relative flex h-[1395px] w-[2160px] flex-col overflow-hidden bg-black font-['Liberation_Sans','Noto_Sans_CJK_SC',sans-serif]">
      <TitleBar />
      <div className="flex min-h-0 flex-1">
        <div className="flex w-[1714px] shrink-0 flex-col overflow-hidden">
          <Toolbar />
          <InfoRow />
          <MainChart />
          <div className="h-[2px] shrink-0 bg-[#a00000]" />
          <div className="flex h-[24px] w-[1640px] shrink-0 items-center gap-[8px] border-r-2 border-[#a00000] pl-[2px]">
            <ChevronCircle />
            <span className="text-[18px] text-[#b0b0b0]">魔柱七色(90,3)</span>
          </div>
          <LowerChart />
          <DateRow />
          <TabRow
            items={[
              { t: "指标" }, { t: "窗口" }, { t: "MACD" }, { t: "VOL-TDX" }, { t: "CCI" }, { t: "趋势动力" }, { t: "主力监控" },
              { t: "私募主图" }, { t: "MA2" }, { t: "测试主图" }, { t: "测试幅图A" }, { t: "测试幅图B" }, { t: "更多" },
              { t: "设置", c: "text-[#54ffff]" },
            ]}
          />
          <TabRow
            items={[
              { t: "扩展∧" }, { t: "关联报价" }, { t: "资金分布" }, { t: "综合资讯", c: "text-[#c0c000]" },
              { t: "行业资讯", c: "text-[#c0c000]" }, { t: "互动问答", c: "text-[#c0c000]" }, { t: "普及版功能说明" },
            ]}
          />
        </div>
        <QuotePanel />
        <SideBar />
      </div>
      <StatusBar />
      <Watermark />
    </div>
  );
}
